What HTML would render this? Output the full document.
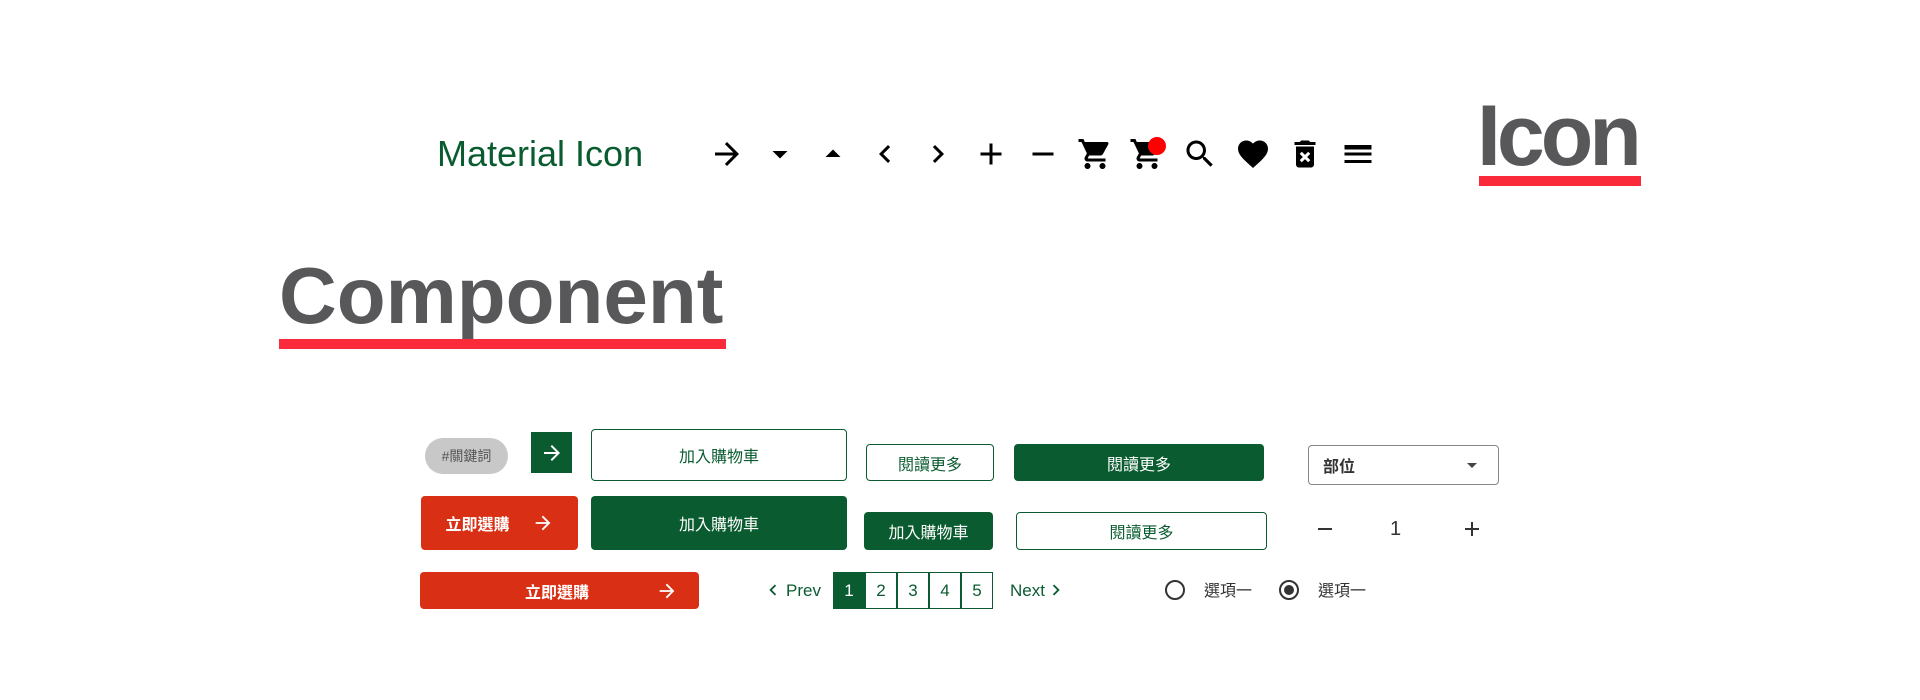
<!DOCTYPE html>
<html><head><meta charset="utf-8"><style>
*{margin:0;padding:0;box-sizing:border-box}
body{width:1920px;height:700px;background:#fff;position:relative;overflow:hidden;font-family:"Liberation Sans","Noto Sans CJK TC",sans-serif}
.a{position:absolute}
.ic{position:absolute;width:36px;height:36px;top:136px}
.btn{position:absolute;display:flex;align-items:center;justify-content:center;font-size:16px;border-radius:4px}
.g{background:#0a5c30;color:#fff}
.o{border:1px solid #0a5c30;color:#0a5c30;background:#fff}
.r{background:#d93015;color:#fff;font-weight:bold}
.pg{position:absolute;top:572px;width:32px;height:37px;border:1px solid #0a5c30;display:flex;align-items:center;justify-content:center;font-size:17px;color:#0a5c30}
</style></head><body>
<div class="a" style="left:437px;top:132px;font-size:36px;color:#0a5c30;line-height:44px">Material Icon</div>
<svg class="ic" style="left:709px" viewBox="0 0 24 24"><path d="M12 4l-1.41 1.41L16.17 11H4v2h12.17l-5.58 5.59L12 20l8-8z"/></svg>
<svg class="ic" style="left:762px" viewBox="0 0 24 24"><path d="M7 10l5 5 5-5z"/></svg>
<svg class="ic" style="left:815px" viewBox="0 0 24 24"><path d="M7 14l5-5 5 5z"/></svg>
<svg class="ic" style="left:867px" viewBox="0 0 24 24"><path d="M15.41 7.41L14 6l-6 6 6 6 1.41-1.41L10.83 12z"/></svg>
<svg class="ic" style="left:920px" viewBox="0 0 24 24"><path d="M10 6L8.59 7.41 13.17 12l-4.58 4.59L10 18l6-6z"/></svg>
<svg class="ic" style="left:973px" viewBox="0 0 24 24"><path d="M19 13h-6v6h-2v-6H5v-2h6V5h2v6h6v2z"/></svg>
<svg class="ic" style="left:1025px" viewBox="0 0 24 24"><path d="M19 13H5v-2h14v2z"/></svg>
<svg class="ic" style="left:1077px" viewBox="0 0 24 24"><path d="M7 18c-1.1 0-1.99.9-1.99 2S5.9 22 7 22s2-.9 2-2-.9-2-2-2zM1 2v2h2l3.6 7.59-1.35 2.45c-.16.28-.25.61-.25.96 0 1.1.9 2 2 2h12v-2H7.42c-.14 0-.25-.11-.25-.25l.03-.12.9-1.63h7.45c.75 0 1.41-.41 1.75-1.03l3.58-6.49A1 1 0 0020 4H5.21l-.94-2H1zm16 16c-1.1 0-1.99.9-1.99 2s.89 2 1.99 2 2-.9 2-2-.9-2-2-2z"/></svg>
<svg class="ic" style="left:1129px" viewBox="0 0 24 24"><path d="M7 18c-1.1 0-1.99.9-1.99 2S5.9 22 7 22s2-.9 2-2-.9-2-2-2zM1 2v2h2l3.6 7.59-1.35 2.45c-.16.28-.25.61-.25.96 0 1.1.9 2 2 2h12v-2H7.42c-.14 0-.25-.11-.25-.25l.03-.12.9-1.63h7.45c.75 0 1.41-.41 1.75-1.03l3.58-6.49A1 1 0 0020 4H5.21l-.94-2H1zm16 16c-1.1 0-1.99.9-1.99 2s.89 2 1.99 2 2-.9 2-2-.9-2-2-2z"/></svg>
<div class="a" style="left:1148px;top:137px;width:18px;height:18px;border-radius:50%;background:#f00"></div>
<svg class="ic" style="left:1182px" viewBox="0 0 24 24"><path d="M15.5 14h-.79l-.28-.27C15.41 12.59 16 11.11 16 9.5 16 5.91 13.09 3 9.5 3S3 5.91 3 9.5 5.91 16 9.5 16c1.61 0 3.09-.59 4.23-1.57l.27.28v.79l5 4.99L20.49 19l-4.99-5zm-6 0C7.01 14 5 11.99 5 9.5S7.01 5 9.5 5 14 7.01 14 9.5 11.99 14 9.5 14z"/></svg>
<svg class="ic" style="left:1235px" viewBox="0 0 24 24"><path d="M12 21.35l-1.45-1.32C5.4 15.36 2 12.28 2 8.5 2 5.42 4.42 3 7.5 3c1.74 0 3.41.81 4.5 2.09C13.09 3.81 14.76 3 16.5 3 19.58 3 22 5.42 22 8.5c0 3.78-3.4 6.86-8.55 11.54L12 21.35z"/></svg>
<svg class="ic" style="left:1287px" viewBox="0 0 24 24"><path d="M6 19c0 1.1.9 2 2 2h8c1.1 0 2-.9 2-2V7H6v12zm2.46-7.12l1.41-1.41L12 12.590l2.12-2.12 1.41 1.41L13.41 14l2.12 2.12-1.41 1.41L12 15.41l-2.12 2.12-1.41-1.41L10.59 14l-2.13-2.12zM15.5 4l-1-1h-5l-1 1H5v2h14V4z"/></svg>
<svg class="ic" style="left:1340px" viewBox="0 0 24 24"><path d="M3 18h18v-2H3v2zm0-5h18v-2H3v2zm0-6v2h18V6H3z"/></svg>

<div class="a" style="left:1477px;top:86px;font-size:86px;font-weight:bold;color:#58585a;line-height:100px;letter-spacing:-4px">Icon</div>
<div class="a" style="left:1479px;top:176px;width:162px;height:10px;background:#fb2a3a"></div>
<div class="a" style="left:279px;top:246px;font-size:80px;font-weight:bold;color:#58585a;line-height:100px">Component</div>
<div class="a" style="left:279px;top:339px;width:447px;height:10px;background:#fb2a3a"></div>

<div class="btn" style="left:425px;top:438px;width:83px;height:36px;border-radius:18px;background:#c8c8c8;color:#555;font-size:14px">#關鍵詞</div>
<div class="btn g" style="left:531px;top:432px;width:41px;height:41px;border-radius:0"><svg width="24" height="24" viewBox="0 0 24 24" fill="#fff"><path d="M12 4l-1.41 1.41L16.17 11H4v2h12.17l-5.58 5.59L12 20l8-8z"/></svg></div>
<div class="btn o" style="left:591px;top:429px;width:256px;height:52px">加入購物車</div>
<div class="btn o" style="left:866px;top:444px;width:128px;height:37px">閱讀更多</div>
<div class="btn g" style="left:1014px;top:444px;width:250px;height:37px">閱讀更多</div>
<div class="btn" style="left:1308px;top:445px;width:191px;height:40px;border:1px solid #888;justify-content:space-between;padding:0 14px;color:#333;font-weight:bold"><span>部位</span><svg width="24" height="24" viewBox="0 0 24 24" fill="#444"><path d="M7 10l5 5 5-5z"/></svg></div>

<div class="btn r" style="left:421px;top:496px;width:157px;height:54px;gap:22px">立即選購 <svg width="22" height="22" viewBox="0 0 24 24" fill="#fff"><path d="M12 4l-1.41 1.41L16.17 11H4v2h12.17l-5.58 5.59L12 20l8-8z"/></svg></div>
<div class="btn g" style="left:591px;top:496px;width:256px;height:54px">加入購物車</div>
<div class="btn g" style="left:864px;top:512px;width:129px;height:38px">加入購物車</div>
<div class="btn o" style="left:1016px;top:512px;width:251px;height:38px">閱讀更多</div>
<svg class="a" style="left:1313px;top:517px" width="24" height="24" viewBox="0 0 24 24"><path d="M19 13H5v-2h14v2z" fill="#333"/></svg>
<div class="a" style="left:1390px;top:518px;font-size:20px;color:#333">1</div>
<svg class="a" style="left:1460px;top:517px" width="24" height="24" viewBox="0 0 24 24"><path d="M19 13h-6v6h-2v-6H5v-2h6V5h2v6h6v2z" fill="#333"/></svg>

<div class="btn r" style="left:420px;top:572px;width:279px;height:37px"><span style="position:absolute;left:105px">立即選購</span><svg style="position:absolute;left:236px" width="22" height="22" viewBox="0 0 24 24" fill="#fff"><path d="M12 4l-1.41 1.41L16.17 11H4v2h12.17l-5.58 5.59L12 20l8-8z"/></svg></div>
<svg class="a" style="left:762px;top:579px" width="22" height="22" viewBox="0 0 24 24" fill="#0a5c30"><path d="M15.41 7.41L14 6l-6 6 6 6 1.41-1.41L10.83 12z"/></svg>
<div class="a" style="left:786px;top:581px;font-size:17px;color:#0a5c30">Prev</div>
<div class="pg" style="left:833px;background:#0a5c30;color:#fff">1</div>
<div class="pg" style="left:865px">2</div>
<div class="pg" style="left:897px">3</div>
<div class="pg" style="left:929px">4</div>
<div class="pg" style="left:961px">5</div>
<div class="a" style="left:1010px;top:581px;font-size:17px;color:#0a5c30">Next</div>
<svg class="a" style="left:1045px;top:579px" width="22" height="22" viewBox="0 0 24 24" fill="#0a5c30"><path d="M10 6L8.59 7.41 13.17 12l-4.58 4.59L10 18l6-6z"/></svg>
<div class="a" style="left:1165px;top:580px;width:20px;height:20px;border:2px solid #333;border-radius:50%"></div>
<div class="a" style="left:1204px;top:577px;font-size:16px;color:#333">選項一</div>
<div class="a" style="left:1279px;top:580px;width:20px;height:20px;border:2px solid #333;border-radius:50%"><div style="margin:3px;width:10px;height:10px;border-radius:50%;background:#333"></div></div>
<div class="a" style="left:1318px;top:577px;font-size:16px;color:#333">選項一</div>
</body></html>
